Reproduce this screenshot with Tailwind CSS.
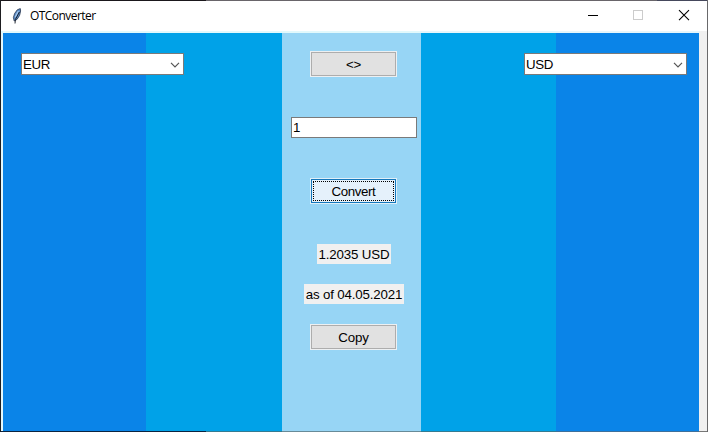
<!DOCTYPE html>
<html lang="en">
<head>
<meta charset="utf-8">
<title>OTConverter</title>
<script src="https://cdn.jsdelivr.net/npm/@tailwindcss/browser@4"></script>
</head>
<body class="w-[708px] h-[432px] overflow-hidden">
<div class="w-[708px] h-[432px] flex flex-col bg-white border-l border-r border-l-[#1d1d20] border-r-[#69696b] text-black">
  <div class="h-px shrink-0 flex"><div class="w-[205px] bg-[#1a171b]"></div><div class="grow bg-[#69656a]"></div><div class="w-[50px] bg-[#45485c]"></div></div>
  <header class="h-[30px] shrink-0 flex items-center bg-white">
    <svg class="ml-[10px] w-[14px] h-[18px]" viewBox="0 0 14 18">
      <path d="M3.2 14 L2.4 10.5 L3.6 6.5 L6.3 2.8 L9.3 1.6 L9.6 4 L8.6 8.4 L6.2 12.2 L4.2 13.5Z" fill="#5b8cc6" stroke="#26344c" stroke-width=".8"/>
      <path d="M4.2 10 L7.4 4" stroke="#a9c9ed" stroke-width="1.2" fill="none"/>
      <path d="M4 16.5 L4.4 12.5 L8.4 5" stroke="#10151f" stroke-width=".9" fill="none"/>
    </svg>
    <h1 class="ml-[5px] text-[12px] leading-[16px] font-['Open_Sans',sans-serif] tracking-[-0.55px]">OTConverter</h1>
    <svg class="ml-auto w-[136px] h-[30px]" viewBox="0 0 136 30" fill="none" shape-rendering="crispEdges">
      <path d="M17 14.5h10" stroke="#000"/>
      <rect x="62.5" y="9.5" width="9" height="9" stroke="#ccc"/>
      <path d="M108 9.2l10 10M118 9.2l-10 10" stroke="#000" stroke-width="1.1" shape-rendering="auto"/>
    </svg>
  </header>
  <div class="h-[2px] shrink-0 flex"><div class="w-[420px] bg-[#e2f9fc]"></div><div class="w-[278px] bg-[#e6f6fb]"></div><div class="grow bg-[#f0f0f0]"></div></div>
  <main class="h-[398px] shrink-0 flex font-['Liberation_Sans',Arial,sans-serif] text-[13.3px] leading-[16px] tracking-[-0.15px]">
    <div class="w-[2px] bg-[#e5f8fc]"></div>
    <section class="w-[143px] bg-[#0a84e8] pt-[20px] pl-[18px]">
      <div class="relative w-[163px] h-[22px] bg-white border border-[#7a7a7a] flex items-center justify-between pl-px pr-[3px]">
        <span class="pt-px tracking-[-0.3px]">EUR</span>
        <svg class="w-[10px] h-[6px] mt-px" viewBox="0 0 10 6" fill="none"><path d="M1 .8l4 4 4-4" stroke="#555" stroke-width="1.2"/></svg>
      </div>
    </section>
    <section class="w-[136px] bg-[#00a2e8]"></section>
    <section class="w-[139px] bg-[#97d5f5] flex flex-col items-center pt-[18px] pl-[4px]">
      <button class="w-[87px] h-[26px] bg-[#e1e1e1] border border-[#edf0f2] flex"><span class="flex w-full h-full items-center justify-center border border-[#adadad] pt-px">&lt;&gt;</span></button>
      <div class="mt-[40px] ml-px w-[126px] h-[21px] bg-white border border-[#7a7a7a] pl-px pt-px flex items-center">1</div>
      <button class="mt-[40px] w-[87px] h-[26px] border border-[#dfeff8] flex"><span class="w-full h-full border border-[#1377bc] bg-[#e5f1fb] p-px flex"><span class="flex w-full h-full items-center justify-center border border-dotted border-black pt-px tracking-[-0.4px]">Convert</span></span></button>
      <div class="mt-[40px] ml-px w-[74px] h-[20px] bg-[#f0f0f0] flex items-center justify-center pt-px whitespace-nowrap">1.2035 USD</div>
      <div class="mt-[20px] ml-px w-[100px] h-[20px] bg-[#f0f0f0] flex items-center justify-center pt-px whitespace-nowrap">as of 04.05.2021</div>
      <button class="mt-[20px] w-[87px] h-[26px] bg-[#e1e1e1] border border-[#edf0f2] flex"><span class="flex w-full h-full items-center justify-center border border-[#adadad] pt-px">Copy</span></button>
    </section>
    <section class="w-[135px] bg-[#00a2e8]"></section>
    <section class="w-[143px] bg-[#0a84e8] pt-[20px] pr-[12px] flex justify-end">
      <div class="relative shrink-0 w-[163px] h-[22px] bg-white border border-[#7a7a7a] flex items-center justify-between pl-px pr-[3px]">
        <span class="pt-px tracking-[-0.3px]">USD</span>
        <svg class="w-[10px] h-[6px] mt-px" viewBox="0 0 10 6" fill="none"><path d="M1 .8l4 4 4-4" stroke="#555" stroke-width="1.2"/></svg>
      </div>
    </section>
    <div class="grow bg-[#f0f0f0]"></div>
  </main>
  <div class="h-px shrink-0 flex"><div class="w-[205px] bg-[#0b2440]"></div><div class="w-[76px] bg-[#347b91]"></div><div class="w-[139px] bg-[#688b98]"></div><div class="w-[135px] bg-[#347b91]"></div><div class="w-[143px] bg-[#3e709b]"></div><div class="grow bg-[#777]"></div></div>
</div>
</body>
</html>
